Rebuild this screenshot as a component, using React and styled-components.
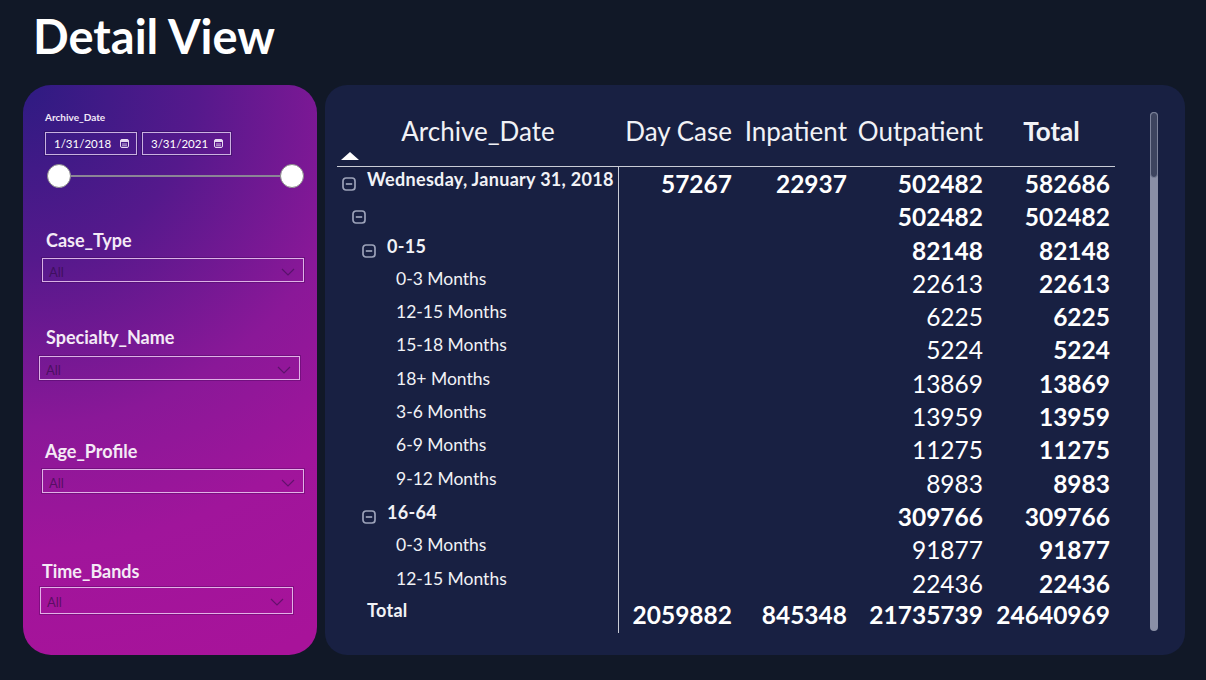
import React from 'react'
import styled, { createGlobalStyle } from 'styled-components'

const GlobalStyle = createGlobalStyle`
  html, body {
    margin: 0;
    padding: 0;
    background: #111827;
  }
  body {
    font-family: Lato, 'Open Sans', sans-serif;
    color: #fff;
  }
`

const Page = styled.div`
  width: 1206px;
  height: 680px;
  background: #111827;
  overflow: hidden;
`

const Title = styled.h1`
  margin: 0;
  padding: 8px 0 0 33px;
  height: 85px;
  box-sizing: border-box;
  font-family: Lato, sans-serif;
  font-weight: 700;
  font-size: 47px;
  line-height: 56px;
  color: #fff;
`

const Main = styled.div`
  display: grid;
  grid-template-columns: 294px 860px;
  gap: 8px;
  margin-left: 23px;
  height: 570px;
`

/* ---------- left filter panel ---------- */

const FilterPanel = styled.div`
  border-radius: 28px;
  background: radial-gradient(circle 620px at 0 0, #2e1b82 0%, #55198c 28%, #8a1898 55%, #a0159b 75%, #a8139a 100%);
  padding: 26px 0 0 16px;
  box-sizing: border-box;
  display: flex;
  flex-direction: column;
`

const SmallLabel = styled.div`
  margin-left: 6px;
  font-size: 10px;
  font-weight: 700;
  line-height: 12px;
  color: #f2e8f8;
`

const DateRow = styled.div`
  display: flex;
  gap: 5px;
  margin: 9px 0 0 6px;
`

const DateBox = styled.div`
  width: ${p => p.$w}px;
  height: 23px;
  box-sizing: border-box;
  border: 1px solid rgba(225, 205, 240, 0.85);
  box-shadow: 0 0 0 1px rgba(30, 10, 70, 0.35);
  display: flex;
  align-items: center;
  justify-content: space-between;
  padding: 0 7px 0 8px;
  font-size: 11.5px;
  color: #fff;
`

const Slider = styled.div`
  position: relative;
  margin: 9px 0 0 8px;
  width: 257px;
  height: 24px;
  display: flex;
  align-items: center;
  justify-content: space-between;
  &::before {
    content: '';
    position: absolute;
    left: 12px;
    right: 12px;
    top: 11px;
    height: 2px;
    background: #8b8596;
  }
`

const Knob = styled.div`
  position: relative;
  width: 24px;
  height: 24px;
  border-radius: 50%;
  background: #fff;
  border: 1px solid #8a8a8a;
  box-sizing: border-box;
`

const Slicer = styled.div`
  margin-top: ${p => p.$mt}px;
  display: flex;
  flex-direction: column;
`

const SlicerLabel = styled.div`
  margin-left: ${p => p.$x}px;
  font-size: 18px;
  font-weight: 700;
  line-height: 22px;
  color: #f4eaf6;
`

const Dropdown = styled.div`
  margin: ${p => p.$gap}px 0 0 ${p => p.$x}px;
  width: ${p => p.$w}px;
  height: ${p => p.$h}px;
  box-sizing: border-box;
  border: 1px solid rgba(238, 205, 245, 0.85);
  box-shadow: 0 0 0 1px rgba(50, 0, 70, 0.3);
  display: flex;
  align-items: center;
  justify-content: space-between;
  padding: 3px 8px 0 6px;
  font-size: 13px;
  color: rgba(45, 10, 65, 0.62);
`

const CalendarIcon = () => (
  <svg width="9" height="9" viewBox="0 0 9 9">
    <rect x="0.5" y="0.5" width="8" height="8" rx="1.5" fill="none" stroke="#e8dcf2" strokeWidth="1" />
    <rect x="0.5" y="0.5" width="8" height="2.5" rx="1" fill="#e8dcf2" />
    <line x1="2" y1="5" x2="7" y2="5" stroke="#e8dcf2" strokeWidth="0.8" />
    <line x1="2" y1="6.8" x2="7" y2="6.8" stroke="#e8dcf2" strokeWidth="0.8" />
  </svg>
)

const Chevron = () => (
  <svg width="14" height="8" viewBox="0 0 14 8">
    <polyline points="1,1 7,7 13,1" fill="none" stroke="rgba(60,15,80,0.6)" strokeWidth="1.2" />
  </svg>
)

const slicers = [
  { name: 'Case_Type', mt: 41, lx: 7, gap: 7, x: 3, w: 262, h: 24 },
  { name: 'Specialty_Name', mt: 44, lx: 7, gap: 8, x: 0, w: 261, h: 24 },
  { name: 'Age_Profile', mt: 60, lx: 6, gap: 7, x: 3, w: 262, h: 24 },
  { name: 'Time_Bands', mt: 67, lx: 3, gap: 5, x: 1, w: 253, h: 27 },
]

/* ---------- right matrix panel ---------- */

const MatrixPanel = styled.div`
  border-radius: 22px;
  background: #182042;
  padding: 27px 0 0 12px;
  box-sizing: border-box;
  display: flex;
  gap: 35px;
`

const Matrix = styled.div`
  width: 778px;
  display: flex;
  flex-direction: column;
`

const COLS = '282px 118px 115px 136px 127px'

const HeadRow = styled.div`
  display: grid;
  grid-template-columns: ${COLS};
  height: 55px;
  box-sizing: border-box;
  border-bottom: 1px solid #c9ccd6;
`

const HeadCell = styled.div`
  display: flex;
  flex-direction: column;
  align-items: ${p => (p.$center ? 'center' : 'flex-end')};
  padding-right: ${p => (p.$center ? 0 : 5)}px;
  font-size: 26px;
  font-weight: ${p => (p.$bold ? 700 : 400)};
  line-height: 38px;
  color: #f1f2f6;
  white-space: nowrap;
`

const SortArrow = styled.div`
  align-self: flex-start;
  margin: 2px 0 0 4px;
  width: 0;
  height: 0;
  border-left: 9px solid transparent;
  border-right: 9px solid transparent;
  border-bottom: 8px solid #fff;
`

const BodyRow = styled.div`
  display: grid;
  grid-template-columns: ${COLS};
  height: 33.3px;
`

const LabelCell = styled.div`
  display: flex;
  align-items: flex-start;
  padding: ${p => (p.$total ? 0 : 2)}px 0 0 ${p => p.$indent}px;
  border-right: 1px solid #c9ccd6;
  font-size: ${p => (p.$bold ? 18 : 17.5)}px;
  font-weight: ${p => (p.$bold ? 700 : 400)};
  letter-spacing: ${p => (p.$bold ? 0.3 : 0)}px;
  line-height: 20px;
  color: #f1f2f6;
  white-space: nowrap;
`

const Toggle = styled.span`
  display: inline-flex;
  margin: 8px 11px 0 0;
`

const NumCell = styled.div`
  text-align: right;
  padding-right: 5px;
  font-size: 24.5px;
  font-weight: ${p => (p.$bold ? 700 : 400)};
  line-height: ${p => (p.$total ? 30 : 34)}px;
  color: #fff;
  white-space: nowrap;
`

const Scrollbar = styled.div`
  width: 8px;
  height: 519px;
  border-radius: 4px;
  background: #8a8fa6;
  overflow: hidden;
`

const Thumb = styled.div`
  height: 66px;
  border-radius: 4px;
  background: #3d445f;
  border: 1px solid #7c829a;
  box-sizing: border-box;
`

const CollapseIcon = () => (
  <svg width="14" height="14" viewBox="0 0 14 14">
    <rect x="1" y="1" width="12" height="12" rx="3" fill="none" stroke="#9ca2b9" strokeWidth="1.7" />
    <line x1="3.8" y1="7" x2="10.2" y2="7" stroke="#9ca2b9" strokeWidth="1.7" />
  </svg>
)

// level: indent step, toggle: has collapse icon, sub: subtotal row (all bold)
const rows = [
  { label: 'Wednesday, January 31, 2018', level: 0, toggle: true, sub: true, vals: ['57267', '22937', '502482', '582686'] },
  { label: '', level: 1, toggle: true, sub: true, vals: ['', '', '502482', '502482'] },
  { label: '0-15', level: 2, toggle: true, sub: true, vals: ['', '', '82148', '82148'] },
  { label: '0-3 Months', level: 3, vals: ['', '', '22613', '22613'] },
  { label: '12-15 Months', level: 3, vals: ['', '', '6225', '6225'] },
  { label: '15-18 Months', level: 3, vals: ['', '', '5224', '5224'] },
  { label: '18+ Months', level: 3, vals: ['', '', '13869', '13869'] },
  { label: '3-6 Months', level: 3, vals: ['', '', '13959', '13959'] },
  { label: '6-9 Months', level: 3, vals: ['', '', '11275', '11275'] },
  { label: '9-12 Months', level: 3, vals: ['', '', '8983', '8983'] },
  { label: '16-64', level: 2, toggle: true, sub: true, vals: ['', '', '309766', '309766'] },
  { label: '0-3 Months', level: 3, vals: ['', '', '91877', '91877'] },
  { label: '12-15 Months', level: 3, vals: ['', '', '22436', '22436'] },
]

const indentFor = r => (r.toggle ? 5 + r.level * 10 : 59)

const App = () => (
  <Page>
    <GlobalStyle />
    <Title>Detail View</Title>
    <Main>
      <FilterPanel>
        <SmallLabel>Archive_Date</SmallLabel>
        <DateRow>
          <DateBox $w={92}>1/31/2018<CalendarIcon /></DateBox>
          <DateBox $w={89}>3/31/2021<CalendarIcon /></DateBox>
        </DateRow>
        <Slider>
          <Knob />
          <Knob />
        </Slider>
        {slicers.map(s => (
          <Slicer key={s.name} $mt={s.mt}>
            <SlicerLabel $x={s.lx}>{s.name}</SlicerLabel>
            <Dropdown $gap={s.gap} $x={s.x} $w={s.w} $h={s.h}>
              All
              <Chevron />
            </Dropdown>
          </Slicer>
        ))}
      </FilterPanel>

      <MatrixPanel>
        <Matrix>
          <HeadRow>
            <HeadCell $center>
              Archive_Date
              <SortArrow />
            </HeadCell>
            <HeadCell>Day Case</HeadCell>
            <HeadCell>Inpatient</HeadCell>
            <HeadCell>Outpatient</HeadCell>
            <HeadCell $center $bold>Total</HeadCell>
          </HeadRow>

          {rows.map((r, i) => (
            <BodyRow key={i}>
              <LabelCell $indent={indentFor(r)} $bold={r.sub}>
                {r.toggle && (
                  <Toggle>
                    <CollapseIcon />
                  </Toggle>
                )}
                {r.label}
              </LabelCell>
              {r.vals.map((v, j) => (
                <NumCell key={j} $bold={r.sub || j === 3}>{v}</NumCell>
              ))}
            </BodyRow>
          ))}

          <BodyRow>
            <LabelCell $indent={30} $bold $total>Total</LabelCell>
            {['2059882', '845348', '21735739', '24640969'].map(v => (
              <NumCell key={v} $bold $total>{v}</NumCell>
            ))}
          </BodyRow>
        </Matrix>
        <Scrollbar>
          <Thumb />
        </Scrollbar>
      </MatrixPanel>
    </Main>
  </Page>
)

export default App
